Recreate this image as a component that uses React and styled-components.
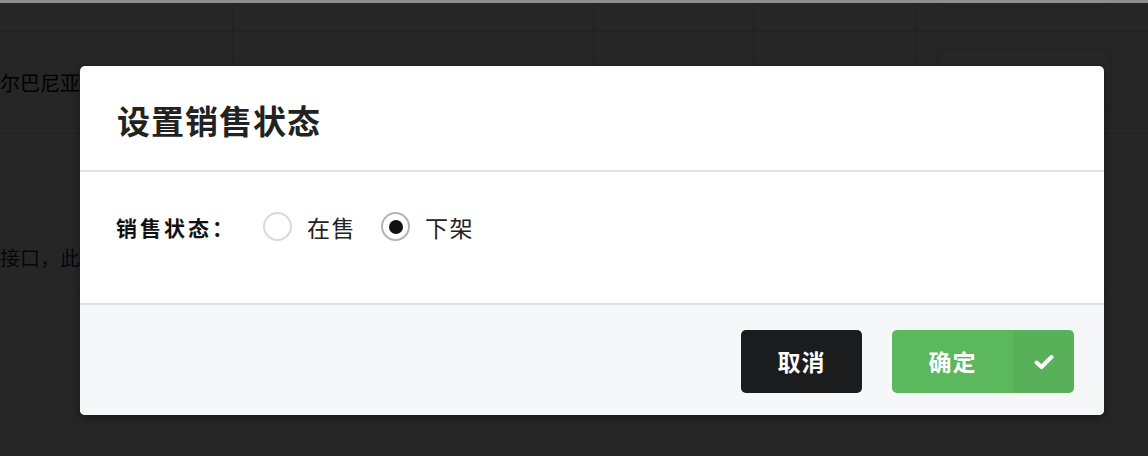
import styled, { createGlobalStyle } from "styled-components"
import { useState } from "react"

const GlobalStyle = createGlobalStyle`
  html, body {
    margin: 0;
    padding: 0;
    background: #ffffff;
    font-family: "Noto Sans CJK SC", "Noto Sans", sans-serif;
    overflow: hidden;
  }
`

const Screen = styled.div`
  position: relative;
  width: 1148px;
  height: 456px;
  overflow: hidden;
  background: #ffffff;
`

const TopStrip = styled.div`
  height: 3px;
  background: #8f8f8f;
  position: relative;
  z-index: 3;
`

const Viewport = styled.div`
  height: 453px;
  overflow: hidden;
`

const Table = styled.div`
  display: flex;
  flex-direction: column;
  width: 1148px;
`

const Row = styled.div`
  display: grid;
  grid-template-columns: 233px 361px 160px 162px 232px;
  height: ${p => p.h}px;
  border-bottom: 1px solid #dcdcdc;
`

const Cell = styled.div`
  border-right: 1px solid #dcdcdc;
  display: flex;
  align-items: center;
  font-size: 20px;
  color: #000;
  overflow: hidden;
  white-space: nowrap;
  &:last-child {
    border-right: none;
    padding-left: 21px;
    align-items: ${p => (p.top ? "flex-start" : "center")};
  }
`

const WideRow = styled.div`
  height: 161px;
  border-bottom: 1px solid #dcdcdc;
  display: flex;
  align-items: flex-end;
  padding-bottom: 22px;
  box-sizing: border-box;
  font-size: 20px;
  color: #1f3b57;
  white-space: nowrap;
`

const GhostButton = styled.div`
  width: 174px;
  height: ${p => p.h}px;
  margin-top: ${p => p.mt || 0}px;
  border: 1px solid #d6d6d6;
  border-radius: 4px;
  box-sizing: border-box;
`

const Overlay = styled.div`
  position: absolute;
  inset: 3px 0 0 0;
  background: rgba(0, 0, 0, 0.85);
  z-index: 1;
`

const Modal = styled.div`
  position: absolute;
  left: 80px;
  top: 66px;
  width: 1024px;
  background: #ffffff;
  border-radius: 5px;
  overflow: hidden;
  box-shadow: 0 3px 10px rgba(0, 0, 0, 0.4);
  z-index: 2;
`

const Header = styled.div`
  height: 106px;
  padding-left: 37px;
  display: flex;
  align-items: center;
  border-bottom: 2px solid #e2e2e2;
  box-sizing: border-box;
`

const Title = styled.h3`
  margin: 0;
  padding-top: 4px;
  font-size: 33px;
  font-weight: 700;
  letter-spacing: 1px;
  color: #222222;
`

const Body = styled.div`
  height: 133px;
  padding-left: 36px;
  display: flex;
  align-items: center;
  border-bottom: 2px solid #e2e2e2;
  box-sizing: border-box;
  padding-bottom: 22px;
`

const FieldLabel = styled.span`
  font-size: 21px;
  font-weight: 700;
  letter-spacing: 3px;
  color: #111111;
  margin-right: 27px;
`

const RadioOption = styled.label`
  display: flex;
  align-items: center;
  gap: 15px;
  margin-right: 25px;
  cursor: pointer;
  font-size: 23px;
  letter-spacing: 1.5px;
  color: #222222;
`

const RadioCircle = styled.span`
  width: 29px;
  height: 29px;
  border-radius: 50%;
  border: 2px solid ${p => (p.checked ? "#b5b5b5" : "#d9d9d9")};
  background: #ffffff;
  box-sizing: border-box;
  display: flex;
  align-items: center;
  justify-content: center;
  &::after {
    content: "";
    width: 14px;
    height: 14px;
    border-radius: 50%;
    background: #111111;
    display: ${p => (p.checked ? "block" : "none")};
  }
`

const Footer = styled.div`
  height: 110px;
  background: #f6f7f9;
  display: flex;
  justify-content: flex-end;
  align-items: flex-start;
  padding: 25px 30px 0 0;
  box-sizing: border-box;
  gap: 30px;
`

const Button = styled.button`
  height: 63px;
  border: none;
  border-radius: 5px;
  padding: 0;
  display: flex;
  align-items: stretch;
  overflow: hidden;
  font-family: inherit;
  font-size: 23px;
  font-weight: 700;
  letter-spacing: 1px;
  color: #ffffff;
  background: ${p => (p.variant === "ok" ? "#5cb85c" : "#1b1c1e")};
  cursor: pointer;
`

const ButtonText = styled.span`
  width: 121px;
  display: flex;
  align-items: center;
  justify-content: center;
  padding-bottom: 2px;
`

const ButtonIcon = styled.span`
  width: 61px;
  display: flex;
  align-items: center;
  justify-content: center;
  background: rgba(0, 0, 0, 0.04);
`

const CheckIcon = () => (
  <svg width="20" height="16" viewBox="0 0 20 16">
    <path d="M2.5 8.5 L7.5 13 L17.5 3" fill="none" stroke="#ffffff" strokeWidth="4" strokeLinecap="round" strokeLinejoin="round" />
  </svg>
)

const options = ["在售", "下架"]

const App = () => {
  const [status, setStatus] = useState("下架")

  return (
    <Screen>
      <GlobalStyle />
      <TopStrip />
      <Viewport>
        <Table>
          <Row h={28}>
            <Cell />
            <Cell />
            <Cell />
            <Cell />
            <Cell top>
              <GhostButton h={44} mt={-40} />
            </Cell>
          </Row>
          <Row h={101}>
            <Cell>尔巴尼亚</Cell>
            <Cell />
            <Cell />
            <Cell />
            <Cell top>
              <GhostButton h={63} mt={17} />
            </Cell>
          </Row>
          <WideRow>接口，此处为说明</WideRow>
        </Table>
      </Viewport>
      <Overlay />
      <Modal>
        <Header>
          <Title>设置销售状态</Title>
        </Header>
        <Body>
          <FieldLabel>销售状态：</FieldLabel>
          {options.map(opt => (
            <RadioOption key={opt} onClick={() => setStatus(opt)}>
              <RadioCircle checked={status === opt} />
              {opt}
            </RadioOption>
          ))}
        </Body>
        <Footer>
          <Button>
            <ButtonText>取消</ButtonText>
          </Button>
          <Button variant="ok">
            <ButtonText>确定</ButtonText>
            <ButtonIcon>
              <CheckIcon />
            </ButtonIcon>
          </Button>
        </Footer>
      </Modal>
    </Screen>
  )
}

export default App
